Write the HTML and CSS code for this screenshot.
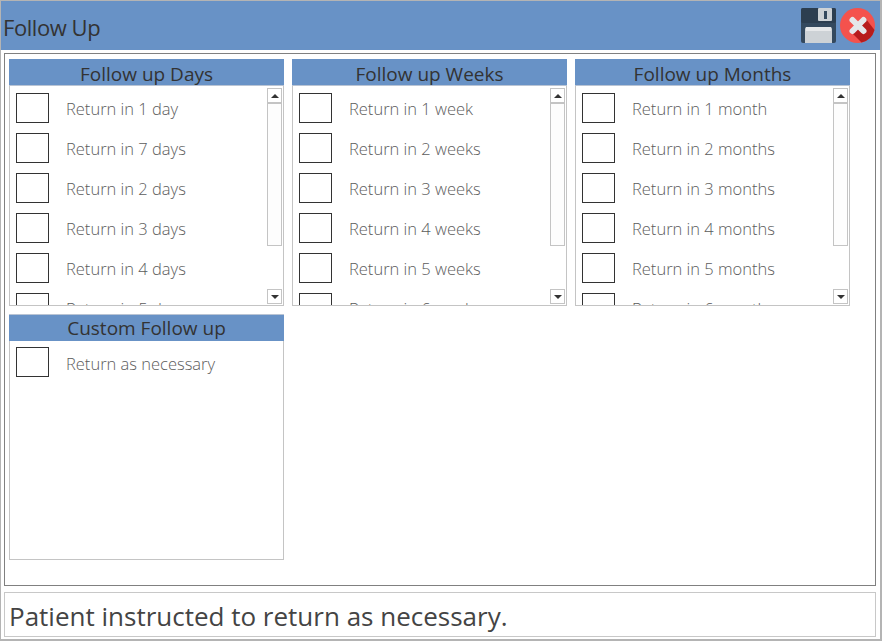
FILE: index.html
```html
<!DOCTYPE html>
<html lang="en">
<head>
<meta charset="utf-8">
<title>Follow Up</title>
<link rel="stylesheet" href="styles.css">
</head>
<body>
<div class="window">
  <header class="titlebar">
    <h1 class="title">Follow Up</h1>
    <div class="actions">
      <svg class="icon" width="35" height="35" viewBox="0 0 35 35" aria-label="Save">
        <rect x="0" y="0" width="35" height="35" rx="2" fill="#34495e"/>
        <rect x="0" y="0" width="35" height="15" rx="2" fill="#2c3e50"/>
        <rect x="17" y="0" width="14" height="13" rx="1" fill="#cdd2d6"/>
        <rect x="23" y="3" width="3" height="8" fill="#34495e"/>
        <path d="M4 35V21a2 2 0 0 1 2-2h23a2 2 0 0 1 2 2v14z" fill="#cdd2d6"/>
        <rect x="5" y="19" width="25" height="4" fill="#e6e8ea"/>
      </svg>
      <svg class="icon" width="35" height="35" viewBox="0 0 35 35" aria-label="Close">
        <circle cx="17.500" cy="17.500" r="17.500" fill="#f4524d"/>
        <path d="M11 24l10.500 10.500a17.500 17.500 0 0 0 13-12.500L26 11z" fill="#b71c1c"/>
        <path d="M12.500 12l11 11M23.500 12l-11 11" stroke="#e4e7ea" stroke-width="6" stroke-linecap="round"/>
      </svg>
    </div>
  </header>
  <main class="panel">
    <section class="card">
      <h2 class="card-title">Follow up Days</h2>
      <div class="list-box">
        <ul class="list">
          <li class="row"><span class="check"></span><span class="label">Return in 1 day</span></li>
          <li class="row"><span class="check"></span><span class="label">Return in 7 days</span></li>
          <li class="row"><span class="check"></span><span class="label">Return in 2 days</span></li>
          <li class="row"><span class="check"></span><span class="label">Return in 3 days</span></li>
          <li class="row"><span class="check"></span><span class="label">Return in 4 days</span></li>
          <li class="row"><span class="check"></span><span class="label">Return in 5 days</span></li>
        </ul>
        <div class="scrollbar"><span class="sb-btn"><i class="arrow-up"></i></span><span class="sb-thumb"></span><span class="sb-btn"><i class="arrow-down"></i></span></div>
      </div>
    </section>
    <section class="card">
      <h2 class="card-title">Follow up Weeks</h2>
      <div class="list-box">
        <ul class="list">
          <li class="row"><span class="check"></span><span class="label">Return in 1 week</span></li>
          <li class="row"><span class="check"></span><span class="label">Return in 2 weeks</span></li>
          <li class="row"><span class="check"></span><span class="label">Return in 3 weeks</span></li>
          <li class="row"><span class="check"></span><span class="label">Return in 4 weeks</span></li>
          <li class="row"><span class="check"></span><span class="label">Return in 5 weeks</span></li>
          <li class="row"><span class="check"></span><span class="label">Return in 6 weeks</span></li>
        </ul>
        <div class="scrollbar"><span class="sb-btn"><i class="arrow-up"></i></span><span class="sb-thumb"></span><span class="sb-btn"><i class="arrow-down"></i></span></div>
      </div>
    </section>
    <section class="card">
      <h2 class="card-title">Follow up Months</h2>
      <div class="list-box">
        <ul class="list">
          <li class="row"><span class="check"></span><span class="label">Return in 1 month</span></li>
          <li class="row"><span class="check"></span><span class="label">Return in 2 months</span></li>
          <li class="row"><span class="check"></span><span class="label">Return in 3 months</span></li>
          <li class="row"><span class="check"></span><span class="label">Return in 4 months</span></li>
          <li class="row"><span class="check"></span><span class="label">Return in 5 months</span></li>
          <li class="row"><span class="check"></span><span class="label">Return in 6 months</span></li>
        </ul>
        <div class="scrollbar"><span class="sb-btn"><i class="arrow-up"></i></span><span class="sb-thumb"></span><span class="sb-btn"><i class="arrow-down"></i></span></div>
      </div>
    </section>
    <section class="card">
      <h2 class="card-title card-title-custom">Custom Follow up</h2>
      <div class="list-box">
        <ul class="list list-custom">
          <li class="row"><span class="check"></span><span class="label">Return as necessary</span></li>
        </ul>
      </div>
    </section>
  </main>
  <footer class="summary">Patient instructed to return as necessary.</footer>
</div>
</body>
</html>
```
FILE: styles.css
```css
* { box-sizing: border-box; }
html, body { margin: 0; padding: 0; background: #fff; }
body { width: 882px; height: 641px; overflow: hidden; font-family: "Open Sans", "Noto Sans", sans-serif; }
.window {
  width: 882px; height: 641px;
  border: 1px solid #b4b4b4; border-bottom-width: 2px; border-right-width: 2px;
  display: flex; flex-direction: column;
  background: #fff;
}
.titlebar {
  height: 49px; background: #6892c6; flex: none;
  display: flex; align-items: center; justify-content: space-between;
  padding: 0 5px 0 2px;
}
.title { margin: 2px 0 0; font-size: 22px; font-weight: 400; color: #333; line-height: 1; letter-spacing: -0.45px; }
.actions { display: flex; gap: 4px; align-items: center; }
.icon { display: block; }
.panel {
  margin: 3px 4px 0 3px; height: 533px; flex: none;
  border: 1px solid #808080;
  padding: 5px 4px;
  display: grid; grid-template-columns: repeat(3, 275px); grid-template-rows: 247px 246px;
  column-gap: 8px; row-gap: 8px;
  align-content: start;
}
.card { display: flex; flex-direction: column; min-height: 0; }
.card-title {
  margin: 0; height: 27px; flex: none; background: #6892c6;
  border-bottom: 1px solid #b9c4d4;
  text-align: center; font-size: 19px; font-weight: 400; color: #333; line-height: 30px; white-space: nowrap; overflow: hidden;
}
.card-title-custom { line-height: 26px; border-top: 1px solid #b9c4d4; border-bottom: 0; }
.list-box {
  flex: 1; min-height: 0; position: relative; overflow: hidden;
  border: 1px solid #c4c4c4; border-top: 0;
}
.list { list-style: none; margin: 0; padding: 7px 0 0 6px; height: 100%; overflow: hidden; }
.list-custom { padding-top: 6px; }
.row { display: flex; align-items: center; height: 30px; margin-bottom: 10px; }
.check { width: 33px; height: 30px; border: 1px solid #333; flex: none; background: #fff; }
.label { margin: 1px 0 0 17px; font-size: 16.500px; font-weight: 300; color: #5c5c5c; white-space: nowrap; }
.list-custom .label { margin-top: 3px; }
.scrollbar {
  position: absolute; top: 2px; right: 1px; bottom: 1px; width: 15px;
  display: flex; flex-direction: column;
}
.sb-btn { height: 15px; flex: none; border: 1px solid #c4c4c4; background: #fff; display: flex; align-items: center; justify-content: center; }
.sb-thumb { flex: 1; border: 1px solid #c4c4c4; background: #fdfdfd; margin-bottom: 43px; }
.arrow-up { width: 0; height: 0; border: 4px solid transparent; border-top: 0; border-bottom: 4px solid #333; }
.arrow-down { width: 0; height: 0; border: 4px solid transparent; border-bottom: 0; border-top: 4px solid #333; }
.summary {
  margin: 6px 4px 0 3px; height: 45px; flex: none;
  border: 1px solid #c8c8c8;
  padding-left: 4px;
  font-size: 26px; line-height: 46px; color: #444; white-space: nowrap;
}
```
